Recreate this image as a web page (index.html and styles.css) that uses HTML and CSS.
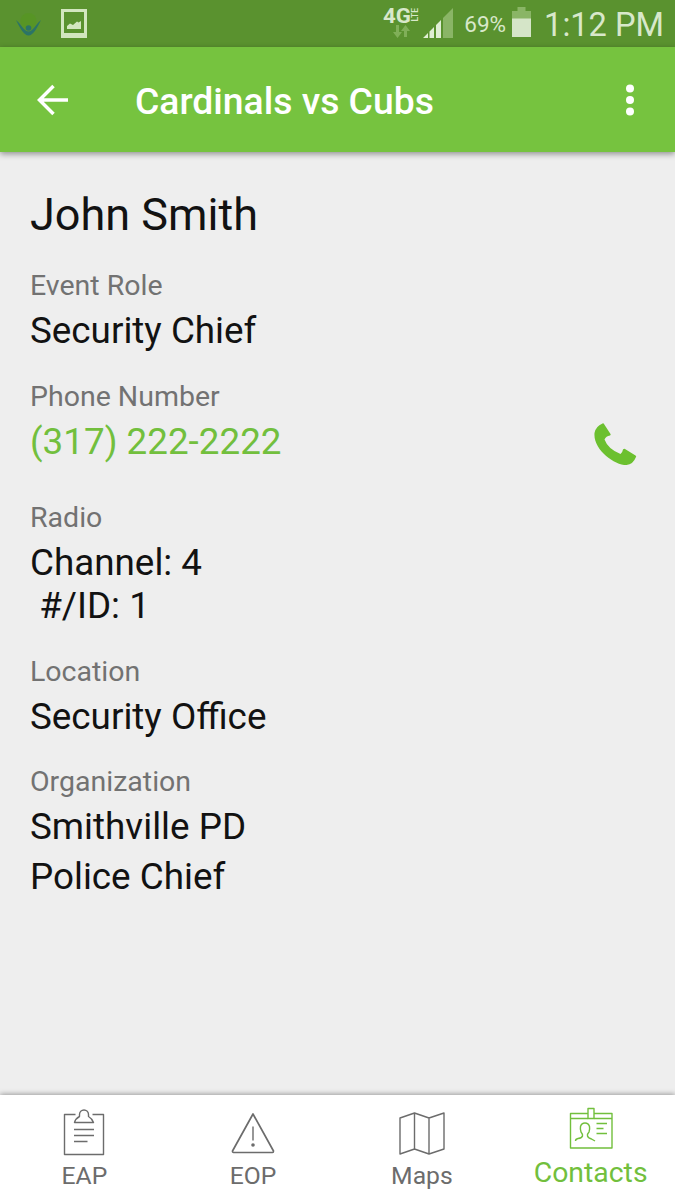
FILE: index.html
```html
<!DOCTYPE html>
<html lang="en">
<head>
    <meta charset="UTF-8">
    <meta name="viewport" content="width=device-width, initial-scale=1.0">
    <title>Cardinals vs Cubs</title>
    <link rel="stylesheet" href="styles.css">
</head>
<body>
    <div class="status-bar">
        <svg class="status-app" width="26" height="24" viewBox="0 0 26 24">
            <circle cx="12.5" cy="9" r="8" fill="#55981f" opacity=".6"/>
            <path d="M0 8C4 11 6 15 8 17Q12.500 22 17 17C19 15 21 11 25 8C22 14 19 20 16 22Q12.500 25 9 22C6 20 3 14 0 8Z" fill="#2b7466"/>
            <circle cx="12.500" cy="16" r="2.800" fill="#2b7466"/>
        </svg>
        <svg class="status-picture" width="26" height="29" viewBox="0 0 26 29">
            <path d="M0 0H26V29H0ZM3 3V24H23V3Z" fill="#d2e6bf" fill-rule="evenodd"/>
            <path d="M6 20V17L9 14.500L12 16L16 12.500L17.500 13.500L20 12V20Z" fill="#d2e6bf"/>
        </svg>
        <div class="network">
            <span class="network-type">4G</span>
            <span class="network-lte">LTE</span>
            <svg class="network-arrows" width="17" height="13" viewBox="0 0 17 13">
                <path d="M3 0H6V7H9L4.500 13L0 7H3Z" fill="#80af58"/>
                <path d="M11 12H14V6H17L12.500 0L8 6H11Z" fill="#80af58"/>
            </svg>
        </div>
        <svg class="signal" width="30" height="30" viewBox="0 0 30 30">
            <path d="M20 10L30 0V30H20Z" fill="#8ab566"/>
            <path d="M0 30L5 25V30ZM6.500 23.500L11 19V30H6.500ZM13 17L18 12V30H13Z" fill="#e0eed4"/>
        </svg>
        <span class="battery-level">69%</span>
        <svg class="battery" width="19" height="30" viewBox="0 0 19 30">
            <path d="M5.500 0H13.500V4H19V12H0V4H5.500Z" fill="#8ab566"/>
            <rect y="11.500" width="19" height="18.500" fill="#d5e5c8"/>
        </svg>
        <span class="clock">1:12 PM</span>
    </div>

    <header class="app-bar">
        <svg class="back" width="32" height="32" viewBox="0 0 32 32">
            <path d="M16.500 2L2.500 16L16.500 30M3 16H31" fill="none" stroke="#fff" stroke-width="3.500"/>
        </svg>
        <h1 class="title">Cardinals vs Cubs</h1>
        <svg class="more" width="8" height="32" viewBox="0 0 8 32">
            <circle cx="4" cy="4.500" r="4" fill="#fff"/>
            <circle cx="4" cy="16" r="4" fill="#fff"/>
            <circle cx="4" cy="27.500" r="4" fill="#fff"/>
        </svg>
    </header>

    <main class="contact">
        <h2 class="name">John Smith</h2>

        <div class="field">
            <div class="label">Event Role</div>
            <div class="value">Security Chief</div>
        </div>

        <div class="field phone">
            <div>
                <div class="label">Phone Number</div>
                <div class="value number">(317) 222-2222</div>
            </div>
            <svg class="call" width="43" height="43" viewBox="0 0 43 43">
                <path d="M8.500 0.500Q9.500 0 10 1L16.500 11Q17 12 16 12.500Q12 13 10.500 16.500Q14 26 26.500 31Q28.500 29.500 29 26.500Q30 25.500 31 26L41.500 32.500Q42.500 33 42 34Q39 41.500 32.500 42C20 42 -1 26 0.500 10Q1.500 3.500 8.500 0.500Z" fill="#6cc02f"/>
            </svg>
        </div>

        <div class="field">
            <div class="label">Radio</div>
            <div class="value radio">Channel: 4
 #/ID: 1</div>
        </div>

        <div class="field">
            <div class="label">Location</div>
            <div class="value">Security Office</div>
        </div>

        <div class="field">
            <div class="label">Organization</div>
            <div class="value">Smithville PD</div>
            <div class="value position">Police Chief</div>
        </div>
    </main>

    <nav class="tabs">
        <div class="tab">
            <svg width="42" height="47" viewBox="0 0 42 47">
                <path d="M12.500 5.500H1.500V45.500H40.500V5.500H29.500" />
                <path d="M11.500 13.500Q12.500 9.500 16.500 7.500V5.500A4.500 4.500 0 0 1 25.500 5.500V7.500Q29 9.500 30.500 13.500Z"/>
                <path d="M11 20.500H31M11 26.500H31M11 32.500H24.500"/>
            </svg>
            <span>EAP</span>
        </div>
        <div class="tab">
            <svg width="44" height="47" viewBox="0 0 44 47">
                <path d="M22 5L42.500 42Q42.500 43.500 41.500 43.500H2.500Q1.500 43.500 1.500 42Z" stroke-width="1.700"/>
                <path d="M22 17.500V31.500"/>
                <circle class="dot" cx="22" cy="36" r="1.800"/>
            </svg>
            <span>EOP</span>
        </div>
        <div class="tab">
            <svg width="46" height="47" viewBox="0 0 46 47">
                <path d="M1 9L15.500 4L30 9L45 4V40L30 45L15.500 40L1 45ZM15.500 4V40M30 9V45"/>
            </svg>
            <span>Maps</span>
        </div>
        <div class="tab active">
            <svg width="44" height="43" viewBox="0 0 44 43">
                <path d="M19 6.500H1.500V41H43V6.500H25M1.500 11.500H19M25 11.500H43"/>
                <path d="M19 1.500H25V11.500H19Z"/>
                <path d="M6.500 34Q6.500 32 9 31.500Q13 31 13.500 29Q13.800 27 12 25Q11 22 11.500 19.500Q12.500 16 16 16T20.500 19.500Q21 22 20 25Q18 27 18.500 29Q19 31 22.500 32L26 34"/>
                <path d="M27.500 16.500H38M27.500 21.500H34.500M27.500 26.500H38"/>
            </svg>
            <span>Contacts</span>
        </div>
    </nav>
</body>
</html>
```
FILE: styles.css
```css
* {
    box-sizing: border-box;
}
body {
    margin: 0;
    height: 1200px;
    display: flex;
    flex-direction: column;
    overflow: hidden;
    background-color: #eeeeee;
    font-family: Roboto, sans-serif;
    color: #121212;
}
.status-bar {
    display: flex;
    align-items: flex-start;
    height: 47px;
    padding: 0 11px 0 16px;
    background-color: #5a922f;
    color: #d8e8ca;
}
.status-app {
    margin-top: 12px;
}
.status-picture {
    margin: 9px 0 0 19px;
}
.network {
    position: relative;
    width: 36px;
    height: 40px;
    margin-left: auto;
}
.network-type {
    position: absolute;
    top: 7px;
    left: 0;
    font-size: 19.5px;
    font-weight: 700;
    line-height: 20px;
    transform: scaleX(1.14);
    transform-origin: left;
}
.network-lte {
    position: absolute;
    top: 8px;
    left: 28px;
    font-size: 8.5px;
    font-weight: 500;
    line-height: 8px;
    writing-mode: vertical-rl;
    transform: rotate(180deg);
}
.network-arrows {
    position: absolute;
    top: 25px;
    left: 10px;
}
.signal {
    margin: 8px 0 0 4px;
}
.battery-level {
    margin: 11px 0 0 11px;
    font-size: 22.5px;
    line-height: 27px;
}
.battery {
    margin: 7px 0 0 6px;
}
.clock {
    margin: 6px 0 0 13px;
    font-size: 32.6px;
    line-height: 39px;
}
.app-bar {
    display: flex;
    align-items: center;
    height: 105px;
    padding: 0 41px 0 37px;
    background-color: #76c33f;
    box-shadow: 0 2px 6px rgba(0,0,0,0.4);
    color: #fff;
}
.title {
    margin: 2px auto 0 66px;
    font-size: 37.3px;
    font-weight: 500;
    line-height: 44px;
}
.contact {
    flex: 1;
    padding: 36px 38px 0 30px;
}
.name {
    margin: 0 0 28px;
    font-size: 45px;
    font-weight: 400;
    line-height: 53px;
}
.field {
    margin-bottom: 27px;
}
.label {
    margin-bottom: 7px;
    font-size: 28.5px;
    line-height: 33px;
    color: #727272;
}
.value {
    font-size: 36.8px;
    line-height: 43.5px;
}
.phone {
    display: flex;
    justify-content: space-between;
    margin-bottom: 35px;
}
.phone > div {
    height: 84px;
}
.number {
    color: #72bf3d;
}
.call {
    margin-top: 43px;
}
.radio {
    white-space: pre;
}
.position {
    margin-top: 6px;
}
.tabs {
    display: grid;
    grid-template-columns: repeat(4, 1fr);
    height: 105px;
    background-color: #fff;
    box-shadow: 0 -1px 5px rgba(0,0,0,0.35);
}
.tab {
    display: flex;
    flex-direction: column;
    align-items: center;
    padding-top: 14px;
    font-size: 24.7px;
    line-height: 29px;
    color: #6c6c6c;
}
.tab svg {
    fill: none;
    stroke: currentColor;
    stroke-width: 1.4;
    stroke-linejoin: round;
}
.tab span {
    margin-top: 5px;
}
.tab .dot {
    fill: currentColor;
    stroke: none;
}
.tab.active {
    padding-top: 12px;
    font-size: 28.4px;
    line-height: 33px;
    color: #72bf3d;
}
.tab.active span {
    margin-top: 6px;
}
```
